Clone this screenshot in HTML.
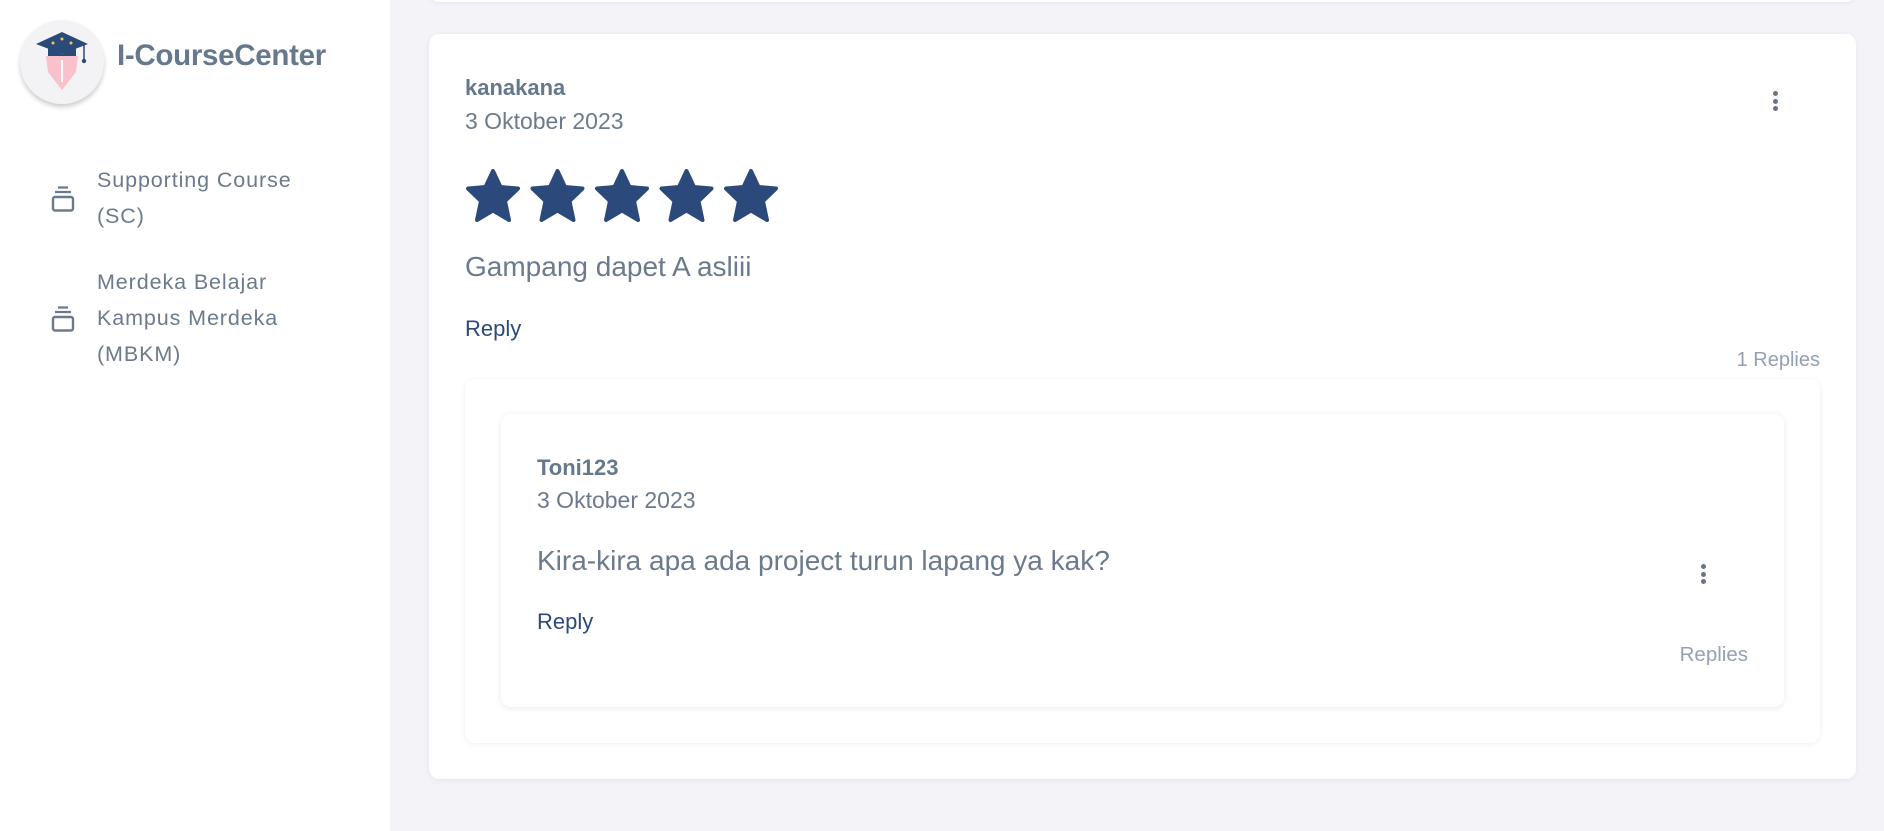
<!DOCTYPE html>
<html><head><meta charset="utf-8"><style>
*{margin:0;padding:0;box-sizing:border-box}
body{width:1884px;height:831px;overflow:hidden;background:#f3f3f8;font-family:"Liberation Sans",sans-serif;color:#6b7a8c;position:relative}
.side{position:absolute;left:0;top:0;width:390px;height:831px;background:#fff}
.logo{position:absolute;left:20px;top:20px;width:84px;height:84px;border-radius:50%;background:#f3f3f6;box-shadow:0 3px 5px rgba(0,0,0,.2)}
.title{position:absolute;left:117px;top:39px;font-size:29.5px;font-weight:bold;color:#66788c;letter-spacing:-0.3px}
.mi{position:absolute;left:97px;font-size:21.5px;line-height:36px;color:#6b7a8c;letter-spacing:0.9px}
.ic{position:absolute;left:51px}
.card{position:absolute;background:#fff;border-radius:10px}
.abs{position:absolute;white-space:nowrap}
.dots{position:absolute;width:6px}
.dots i{display:block;width:5px;height:5px;border-radius:50%;background:#6b7482;margin-bottom:2.5px}
</style></head><body>
<div class="card" style="left:429px;top:-20px;width:1427px;height:22px;box-shadow:0 1px 4px rgba(0,0,0,.06)"></div>
<div class="side">
 <div class="logo">
  <svg width="84" height="84" viewBox="0 0 84 84">
   <path d="M26 36 L58 36 L56 52 L42 70 L28 52 Z" fill="#f8c1cc"/>
   <path d="M42 40 L42 62" stroke="#fff" stroke-width="2"/>
   <path d="M16 24 L42 12 L68 24 L42 34 Z" fill="#2a4a7a"/>
   <path d="M28 28 L28 36 L56 36 L56 28 L42 34 Z" fill="#2a4a7a"/>
   <path d="M64 25 L64 40" stroke="#2a4a7a" stroke-width="1.5"/><circle cx="64" cy="41" r="2.2" fill="#2a4a7a"/>
   <circle cx="33" cy="23" r="1.5" fill="#f3c84a"/><circle cx="42" cy="19" r="1.5" fill="#f3c84a"/><circle cx="51" cy="23" r="1.5" fill="#f3c84a"/>
  </svg>
 </div>
 <div class="title">I-CourseCenter</div>
 <svg class="ic" style="top:186px" width="24" height="26" viewBox="0 0 24 26"><path d="M7 1.5h10M4 6h16" stroke="#6b7a8c" stroke-width="2.2"/><rect x="2" y="11" width="20" height="13.5" rx="2" fill="none" stroke="#6b7a8c" stroke-width="2.4"/></svg>
 <div class="mi" style="top:162px">Supporting Course<br>(SC)</div>
 <svg class="ic" style="top:306px" width="24" height="26" viewBox="0 0 24 26"><path d="M7 1.5h10M4 6h16" stroke="#6b7a8c" stroke-width="2.2"/><rect x="2" y="11" width="20" height="13.5" rx="2" fill="none" stroke="#6b7a8c" stroke-width="2.4"/></svg>
 <div class="mi" style="top:264px">Merdeka Belajar<br>Kampus Merdeka<br>(MBKM)</div>
</div>
<div class="card" style="left:429px;top:34px;width:1427px;height:745px;box-shadow:0 1px 6px rgba(0,0,0,.06)"></div>
<div class="abs" style="left:465px;top:75px;font-size:22px;font-weight:bold;color:#66788c">kanakana</div>
<div class="abs" style="left:465px;top:108px;font-size:23px">3 Oktober 2023</div>
<div class="dots" style="left:1773px;top:91px"><i></i><i></i><i></i></div>
<svg class="abs" style="left:465px;top:168px" width="320" height="56" viewBox="0 0 320 56">
 <defs><path id="s" d="M28 3 L35.5 19 L53 20.5 L40 33 L44 52 L28 42.5 L12 52 L16 33 L3 20.5 L20.5 19 Z" fill="#2b4a7b" stroke="#2b4a7b" stroke-width="4" stroke-linejoin="round"/></defs>
 <use href="#s" x="0"/><use href="#s" x="64.5"/><use href="#s" x="129"/><use href="#s" x="193.5"/><use href="#s" x="258"/>
</svg>
<div class="abs" style="left:465px;top:251px;font-size:28px">Gampang dapet A asliii</div>
<div class="abs" style="left:465px;top:316px;font-size:22px;color:#2b4a7b">Reply</div>
<div class="abs" style="right:64px;top:349px;font-size:20px;color:#94a1b4">1 Replies</div>
<div class="card" style="left:465px;top:379px;width:1355px;height:364px;box-shadow:0 1px 6px rgba(0,0,0,.07)"></div>
<div class="card" style="left:501px;top:414px;width:1283px;height:293px;box-shadow:0 1px 7px rgba(0,0,0,.09)"></div>
<div class="abs" style="left:537px;top:455px;font-size:22px;font-weight:bold;color:#66788c">Toni123</div>
<div class="abs" style="left:537px;top:487px;font-size:23px">3 Oktober 2023</div>
<div class="abs" style="left:537px;top:545px;font-size:28px">Kira-kira apa ada project turun lapang ya kak?</div>
<div class="dots" style="left:1701px;top:564px"><i></i><i></i><i></i></div>
<div class="abs" style="left:537px;top:609px;font-size:22px;color:#2b4a7b">Reply</div>
<div class="abs" style="right:136px;top:643px;font-size:20.5px;color:#94a1b4">Replies</div>
</body></html>
